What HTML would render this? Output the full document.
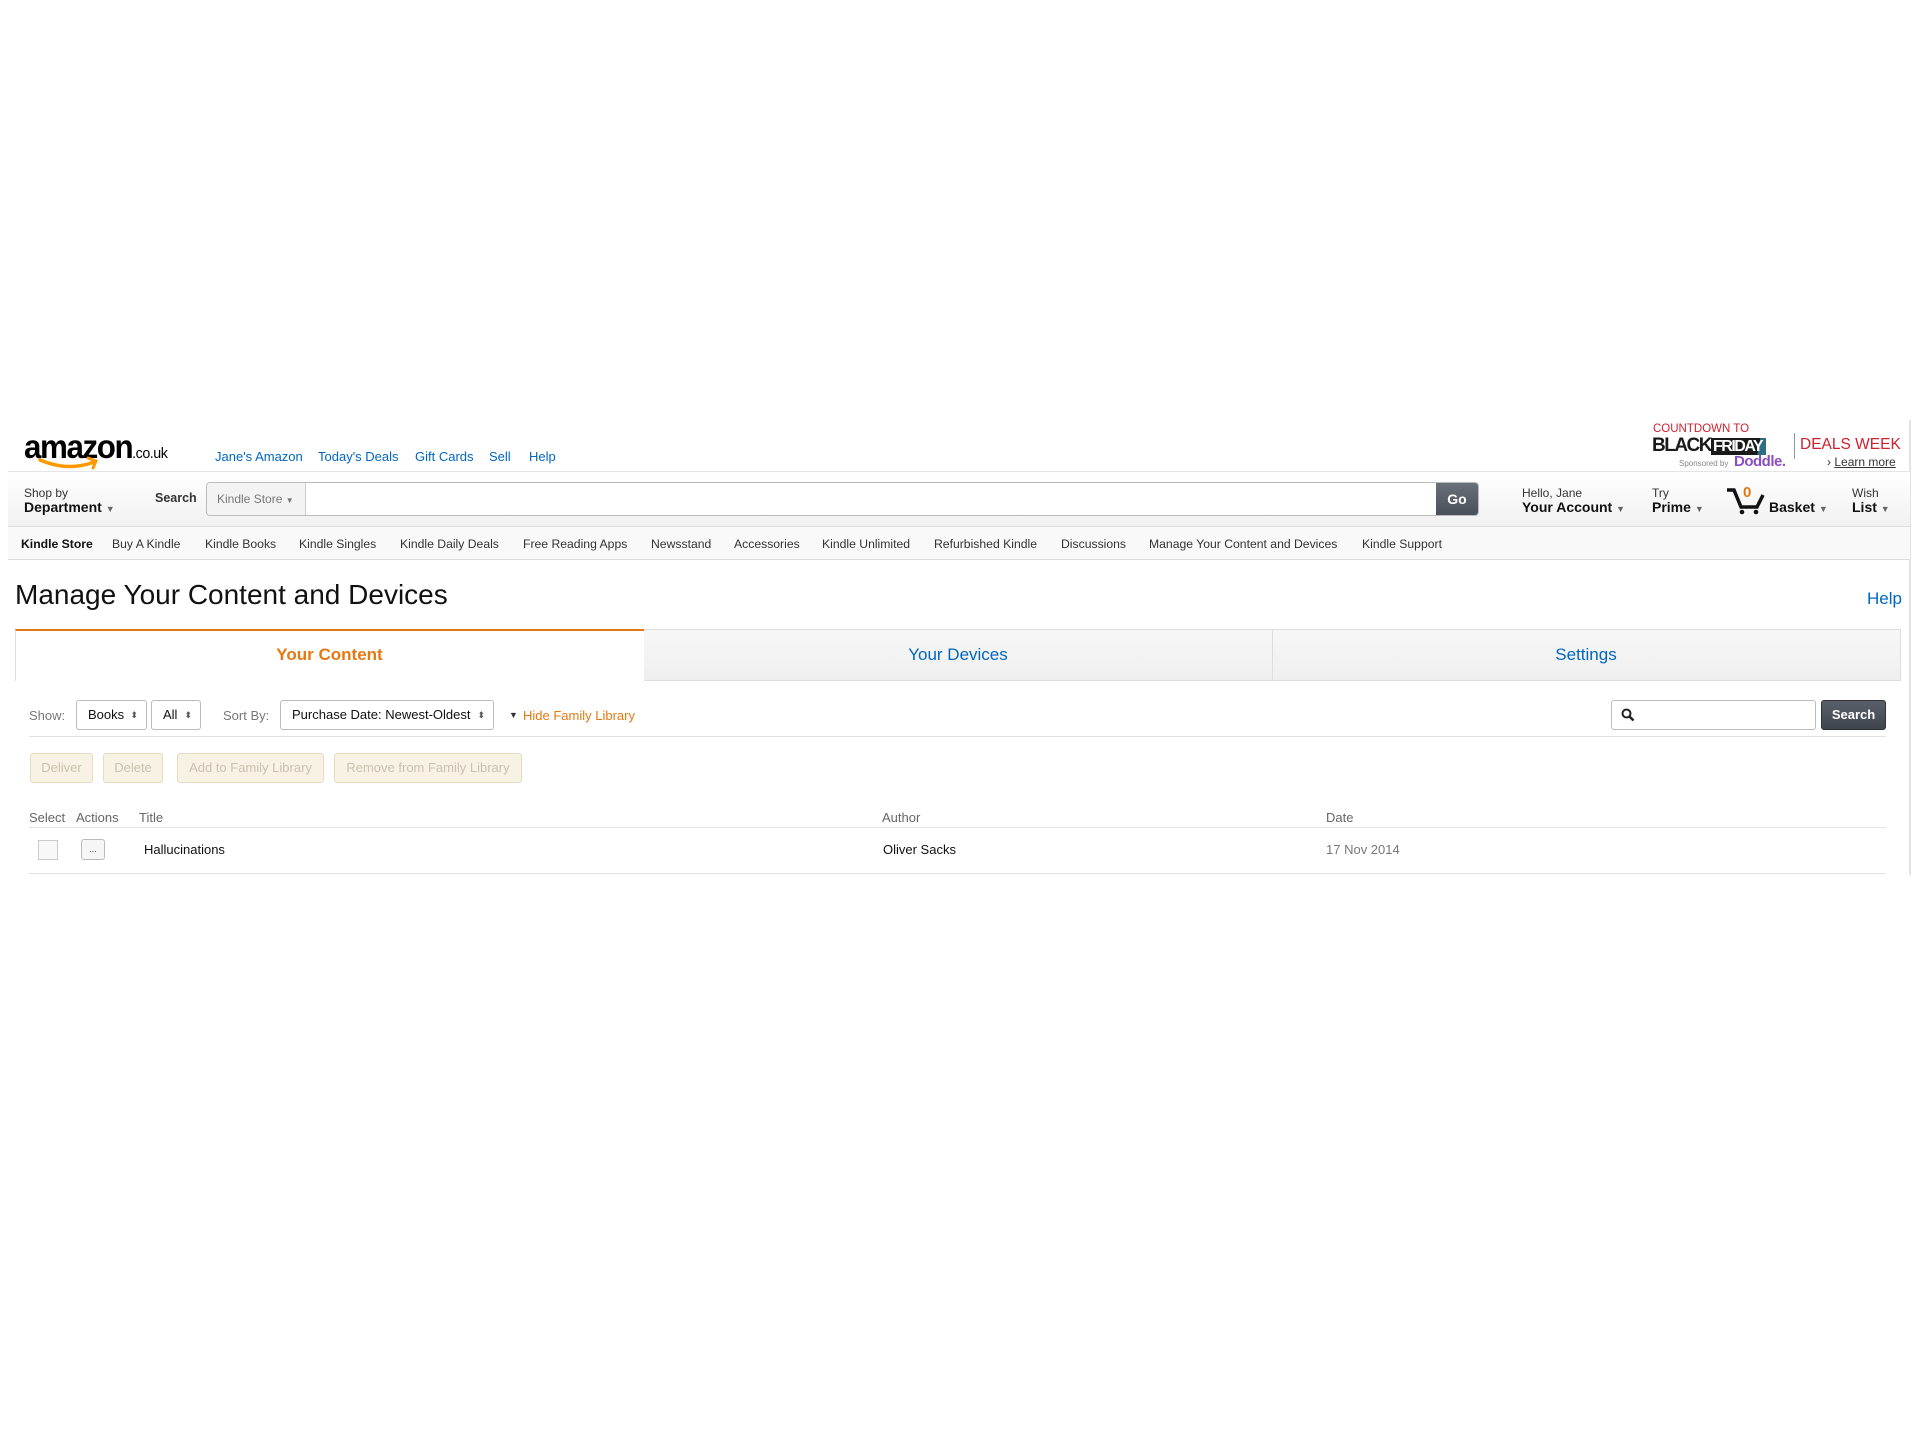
<!DOCTYPE html>
<html><head><meta charset="utf-8"><style>
*{margin:0;padding:0;box-sizing:border-box}
body{width:1912px;height:1434px;background:#fff;font-family:"Liberation Sans",Arial,sans-serif;position:relative;overflow:hidden;color:#111}
.a{position:absolute;white-space:nowrap}
.lk{color:#0066c0;font-size:13px}
.sn{font-size:12.2px;color:#333;top:537px}
.gbtn{position:absolute;top:753px;height:30px;background:#f7f2e4;border:1px solid #e8dcc0;border-radius:3px;color:#c9c2b0;font-size:13px;text-align:center;line-height:28px}
.sel{position:absolute;top:700px;height:30px;border:1px solid #bbb;border-radius:3px;font-size:13px;line-height:28px;padding-left:11px;color:#111;background:#fff}
.sel i{position:absolute;right:8px;top:0;font-style:normal;font-size:9px;color:#555}
.hd{font-size:13px;color:#666;top:810px}
</style></head><body>
<div class="a" style="right:1px;top:420px;width:2px;height:455px;background:#e3e3e3"></div>

<!-- logo -->
<div class="a" style="left:24px;top:428px;font-size:33px;font-weight:bold;letter-spacing:-1.5px;color:#000;transform:scaleX(0.95);transform-origin:left">amazon<span style="font-size:15px;letter-spacing:-0.5px;font-weight:normal">.co.uk</span></div>
<svg class="a" style="left:38px;top:456px" width="64" height="16"><path d="M2 4 Q30 16 56 6" stroke="#f90" stroke-width="3.5" fill="none" stroke-linecap="round"/><path d="M50 2 L58 5 L55 12" stroke="#f90" stroke-width="3" fill="none" stroke-linecap="round"/></svg>

<div class="a lk" style="left:215px;top:449px">Jane's Amazon</div>
<div class="a lk" style="left:318px;top:449px">Today's Deals</div>
<div class="a lk" style="left:415px;top:449px">Gift Cards</div>
<div class="a lk" style="left:489px;top:449px">Sell</div>
<div class="a lk" style="left:529px;top:449px">Help</div>

<!-- banner -->
<div class="a" style="left:1653px;top:423px;font-size:11.5px;color:#d0202e">COUNTDOWN TO</div>
<div class="a" style="left:1652px;top:435px;font-size:19px;font-weight:900;color:#1a1a1a;letter-spacing:-1.5px">BLACK<span style="color:#fff;background:linear-gradient(100deg,#1a1a1a 85%,#2d6e86 85%);padding:0 4px 0 2px;font-size:16px">FRIDAY</span></div>
<div class="a" style="left:1794px;top:433px;width:1px;height:26px;background:#999"></div>
<div class="a" style="left:1800px;top:436px;font-size:15.5px;color:#d0202e">DEALS WEEK</div>
<div class="a" style="left:1679px;top:459px;font-size:8px;color:#888">Sponsored by</div>
<div class="a" style="left:1734px;top:453px;font-size:15px;font-weight:bold;color:#8a4fbf;letter-spacing:-0.5px">Doddle.</div>
<div class="a" style="left:1827px;top:455px;font-size:12px;color:#333">› <u>Learn more</u></div>

<!-- nav bar -->
<div class="a" style="left:8px;top:471px;width:1902px;height:56px;background:linear-gradient(#fff,#f1f1f1);border-top:1px solid #e4e4e4;border-bottom:1px solid #ddd"></div>
<div class="a" style="left:24px;top:486px;font-size:12px;color:#333">Shop by</div>
<div class="a" style="left:24px;top:499px;font-size:14px;font-weight:bold;color:#111">Department <span style="font-size:9px;color:#666">▼</span></div>
<div class="a" style="left:155px;top:491px;font-size:12.5px;font-weight:bold;color:#333">Search</div>
<div class="a" style="left:206px;top:482px;width:1273px;height:34px;border:1px solid #bbb;border-radius:4px;background:#fff;overflow:hidden">
 <div class="a" style="left:0;top:0;width:99px;height:32px;background:#f3f3f3;border-right:1px solid #ccc;font-size:12px;color:#777;line-height:32px;padding-left:10px">Kindle Store <span style="font-size:8px">▼</span></div>
 <div class="a" style="right:0;top:0;width:42px;height:32px;background:linear-gradient(#6a7079,#4a5059);color:#fff;font-weight:bold;font-size:14px;text-align:center;line-height:32px">Go</div>
</div>
<div class="a" style="left:1522px;top:486px;font-size:12px;color:#333">Hello, Jane</div>
<div class="a" style="left:1522px;top:499px;font-size:14px;font-weight:bold">Your Account <span style="font-size:9px;color:#666">▼</span></div>
<div class="a" style="left:1652px;top:486px;font-size:12px;color:#333">Try</div>
<div class="a" style="left:1652px;top:499px;font-size:14px;font-weight:bold">Prime <span style="font-size:9px;color:#666">▼</span></div>
<svg class="a" style="left:1726px;top:487px" width="40" height="28"><path d="M1 3 H8 L15 20 H31 L37 8" stroke="#111" stroke-width="3.5" fill="none"/><circle cx="16" cy="25" r="2.3" fill="#111"/><circle cx="30" cy="25" r="2.3" fill="#111"/></svg>
<div class="a" style="left:1743px;top:484px;font-size:15px;font-weight:bold;color:#e47911">0</div>
<div class="a" style="left:1769px;top:499px;font-size:14px;font-weight:bold">Basket <span style="font-size:9px;color:#666">▼</span></div>
<div class="a" style="left:1852px;top:486px;font-size:12px;color:#333">Wish</div>
<div class="a" style="left:1852px;top:499px;font-size:14px;font-weight:bold">List <span style="font-size:9px;color:#666">▼</span></div>

<!-- sub nav -->
<div class="a" style="left:8px;top:527px;width:1902px;height:33px;background:#f9f9f9;border-bottom:1px solid #ddd"></div>
<div class="a sn" style="left:21px;font-weight:bold;color:#111">Kindle Store</div>
<div class="a sn" style="left:112px">Buy A Kindle</div>
<div class="a sn" style="left:205px">Kindle Books</div>
<div class="a sn" style="left:299px">Kindle Singles</div>
<div class="a sn" style="left:400px">Kindle Daily Deals</div>
<div class="a sn" style="left:523px">Free Reading Apps</div>
<div class="a sn" style="left:651px">Newsstand</div>
<div class="a sn" style="left:734px">Accessories</div>
<div class="a sn" style="left:822px">Kindle Unlimited</div>
<div class="a sn" style="left:934px">Refurbished Kindle</div>
<div class="a sn" style="left:1061px">Discussions</div>
<div class="a sn" style="left:1149px">Manage Your Content and Devices</div>
<div class="a sn" style="left:1362px">Kindle Support</div>

<!-- title -->
<div class="a" style="left:15px;top:579px;font-size:28px;color:#111">Manage Your Content and Devices</div>
<div class="a" style="left:1867px;top:589px;font-size:17px;color:#0066c0">Help</div>

<!-- tabs -->
<div class="a" style="left:15px;top:629px;width:1886px;height:52px;background:linear-gradient(#f7f7f7,#efefef);border:1px solid #ddd"></div>
<div class="a" style="left:15px;top:629px;width:629px;height:52px;background:#fff;border-top:2px solid #e47911;border-left:1px solid #ddd"></div>
<div class="a" style="left:1272px;top:630px;width:1px;height:50px;background:#ddd"></div>
<div class="a" style="left:15px;top:645px;width:629px;text-align:center;font-size:17px;font-weight:bold;color:#e47911">Your Content</div>
<div class="a" style="left:644px;top:645px;width:628px;text-align:center;font-size:17px;color:#0066c0">Your Devices</div>
<div class="a" style="left:1272px;top:645px;width:628px;text-align:center;font-size:17px;color:#0066c0">Settings</div>

<!-- controls -->
<div class="a" style="left:29px;top:708px;font-size:13px;color:#777">Show:</div>
<div class="sel" style="left:76px;width:71px">Books<i>⬍</i></div>
<div class="sel" style="left:151px;width:50px">All<i>⬍</i></div>
<div class="a" style="left:223px;top:708px;font-size:13px;color:#777">Sort By:</div>
<div class="sel" style="left:280px;width:214px">Purchase Date: Newest-Oldest<i>⬍</i></div>
<div class="a" style="left:509px;top:710px;font-size:9px;color:#333">▼</div>
<div class="a" style="left:523px;top:708px;font-size:13px;color:#e47911">Hide Family Library</div>
<div class="a" style="left:1611px;top:700px;width:205px;height:30px;border:1px solid #bbb;border-radius:3px"></div>
<svg class="a" style="left:1621px;top:708px" width="14" height="14"><circle cx="5.5" cy="5.5" r="4" stroke="#222" stroke-width="2" fill="none"/><path d="M8.5 8.5 L12.5 12.5" stroke="#222" stroke-width="2.5"/></svg>
<div class="a" style="left:1821px;top:700px;width:65px;height:30px;background:linear-gradient(#5a606a,#3f454e);border:1px solid #333;border-radius:3px;color:#fff;font-size:13px;font-weight:bold;text-align:center;line-height:28px">Search</div>
<div class="a" style="left:29px;top:736px;width:1857px;height:1px;background:#e3e3e3"></div>

<div class="gbtn" style="left:30px;width:63px">Deliver</div>
<div class="gbtn" style="left:103px;width:60px">Delete</div>
<div class="gbtn" style="left:177px;width:147px">Add to Family Library</div>
<div class="gbtn" style="left:334px;width:188px">Remove from Family Library</div>

<div class="a hd" style="left:29px">Select</div>
<div class="a hd" style="left:76px">Actions</div>
<div class="a hd" style="left:139px">Title</div>
<div class="a hd" style="left:882px">Author</div>
<div class="a hd" style="left:1326px">Date</div>
<div class="a" style="left:29px;top:827px;width:1857px;height:1px;background:#e3e3e3"></div>
<div class="a" style="left:38px;top:840px;width:20px;height:20px;border:1px solid #ccc;background:#f8f8f8"></div>
<div class="a" style="left:81px;top:839px;width:24px;height:21px;border:1px solid #bbb;border-radius:3px;background:#f6f6f6;font-size:9px;text-align:center;line-height:18px;color:#555">...</div>
<div class="a" style="left:144px;top:842px;font-size:13px;color:#111">Hallucinations</div>
<div class="a" style="left:883px;top:842px;font-size:13px;color:#111">Oliver Sacks</div>
<div class="a" style="left:1326px;top:842px;font-size:13px;color:#777">17 Nov 2014</div>
<div class="a" style="left:29px;top:873px;width:1857px;height:1px;background:#e3e3e3"></div>
</body></html>
